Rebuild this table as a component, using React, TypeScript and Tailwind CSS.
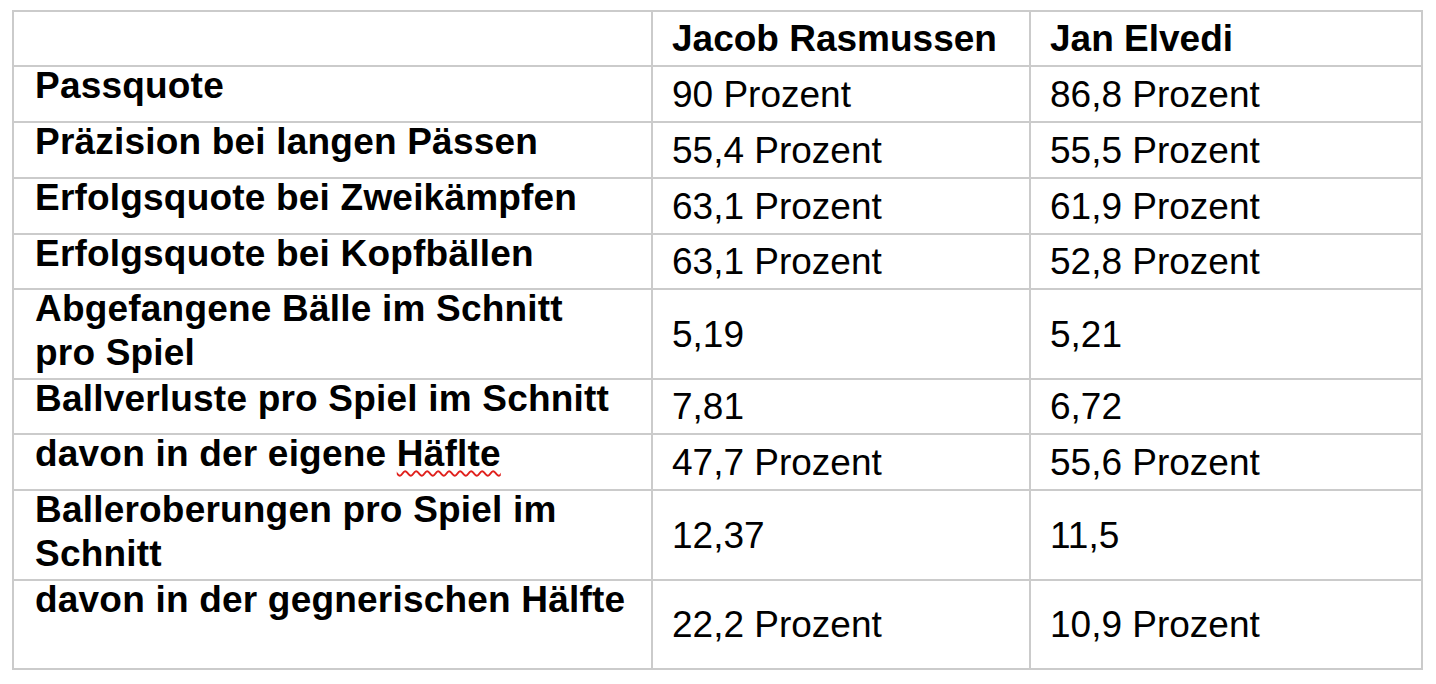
import React from "react";

type Row = { label: React.ReactNode; a: string; b: string; h: string };

const rows: Row[] = [
  { label: "Passquote", a: "90 Prozent", b: "86,8 Prozent", h: "h-[56px]" },
  { label: "Präzision bei langen Pässen", a: "55,4 Prozent", b: "55,5 Prozent", h: "h-[56px]" },
  { label: "Erfolgsquote bei Zweikämpfen", a: "63,1 Prozent", b: "61,9 Prozent", h: "h-[56px]" },
  { label: "Erfolgsquote bei Kopfbällen", a: "63,1 Prozent", b: "52,8 Prozent", h: "h-[55px]" },
  {
    label: (
      <>
        Abgefangene Bälle im Schnitt
        <br />
        pro Spiel
      </>
    ),
    a: "5,19",
    b: "5,21",
    h: "h-[90px]",
  },
  { label: "Ballverluste pro Spiel im Schnitt", a: "7,81", b: "6,72", h: "h-[55px]" },
  {
    label: (
      <>
        davon in der eigene{" "}
        <span className="underline decoration-wavy decoration-[#e0201c] decoration-[1.5px] underline-offset-[4px]">
          Häflte
        </span>
      </>
    ),
    a: "47,7 Prozent",
    b: "55,6 Prozent",
    h: "h-[56px]",
  },
  {
    label: (
      <>
        Balleroberungen pro Spiel im
        <br />
        Schnitt
      </>
    ),
    a: "12,37",
    b: "11,5",
    h: "h-[90px]",
  },
  { label: "davon in der gegnerischen Hälfte", a: "22,2 Prozent", b: "10,9 Prozent", h: "h-[89px]" },
];

export default function App() {
  return (
    <div className="w-[1436px] h-[684px] bg-white text-black overflow-hidden" style={{ fontFamily: '"Liberation Sans", Arial, sans-serif' }}>
      <div className="ml-[12px] mt-[10px] w-[1411px] border-l-2 border-t-2 border-[#cbcbcb] grid grid-cols-[639px_378px_392px] text-[37px] leading-[39px]">
        <div className="h-[55px] border-r-2 border-b-2 border-[#cbcbcb]" />
        <div className="h-[55px] border-r-2 border-b-2 border-[#cbcbcb] flex items-center pl-[19px] font-bold">Jacob Rasmussen</div>
        <div className="h-[55px] border-r-2 border-b-2 border-[#cbcbcb] flex items-center pl-[19px] font-bold">Jan Elvedi</div>
        {rows.map((r, i) => (
          <React.Fragment key={i}>
            <div className={`${r.h} border-r-2 border-b-2 border-[#cbcbcb] pl-[21px] font-bold whitespace-nowrap`}>
              <div className="-mt-[3px] leading-[44px] tracking-[0.2px]">{r.label}</div>
            </div>
            <div className={`${r.h} border-r-2 border-b-2 border-[#cbcbcb] flex items-center pl-[19px]`}>{r.a}</div>
            <div className={`${r.h} border-r-2 border-b-2 border-[#cbcbcb] flex items-center pl-[19px]`}>{r.b}</div>
          </React.Fragment>
        ))}
      </div>
    </div>
  );
}
